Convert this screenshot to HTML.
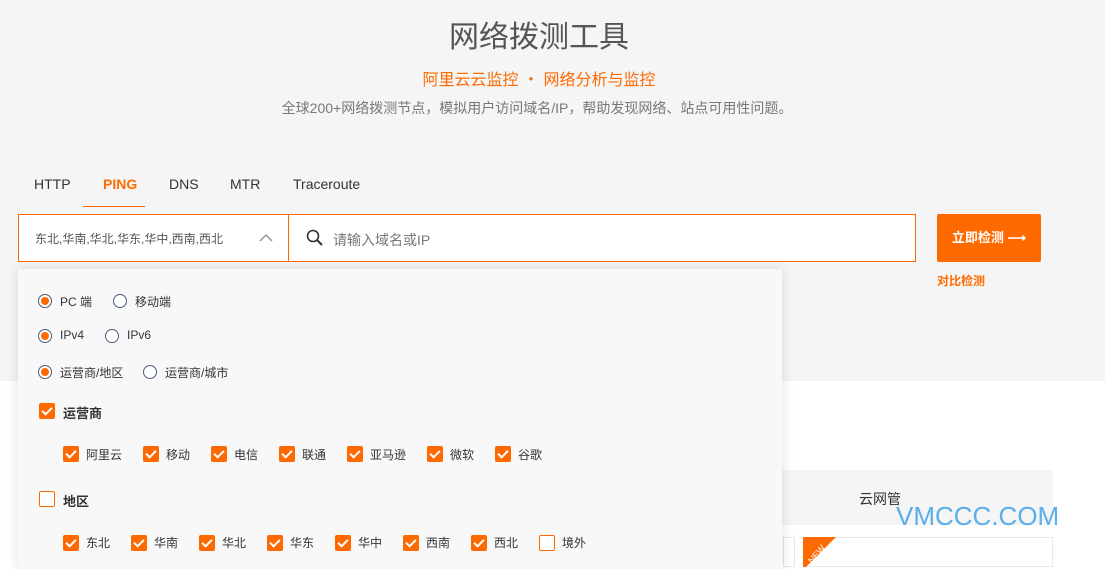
<!DOCTYPE html>
<html><head><meta charset="utf-8"><style>
*{margin:0;padding:0;box-sizing:border-box}
body{width:1105px;height:560px;overflow:hidden;position:relative;background:#fff;font-family:"Liberation Sans","Noto Sans CJK SC",sans-serif;color:#333}
.top{position:absolute;left:0;top:0;width:1105px;height:381px;background:#f5f5f5}
.abs{position:absolute}
h1{position:absolute;left:0;width:1078px;top:12px;text-align:center;font-size:30px;font-weight:normal;color:#555}
.sub{left:0;width:1078px;top:66px;text-align:center;font-size:16px;color:#ff6a00}
.desc{left:0;width:1074px;top:98px;text-align:center;font-size:14px;color:#777}
.tab{top:176px;font-size:14px;color:#333}
.sel{left:18px;top:214px;width:271px;height:48px;border:1px solid #ff6a00;background:#fff}
.inp{left:288px;top:214px;width:628px;height:48px;border:1px solid #ff6a00;background:#fff}
.btn{left:937px;top:214px;width:104px;height:48px;background:#ff6a00;color:#fff;font-size:13px;font-weight:bold;line-height:48px;text-align:center;border-radius:2px}
.panel{left:18px;top:269px;width:764px;height:300px;background:#f8f8f8;box-shadow:0 0 12px rgba(0,0,0,.12)}
.r{position:absolute;width:14px;height:14px;border:1px solid #4a5e78;border-radius:50%;background:#fff}
.r.on::after{content:"";position:absolute;left:2px;top:2px;width:8px;height:8px;border-radius:50%;background:#ff6a00}
.t{position:absolute;font-size:12px;color:#333}
.c{position:absolute;width:16px;height:16px;border-radius:2px;background:#ff6a00}
.c::after{content:"";position:absolute;left:5px;top:2px;width:4px;height:8px;border:solid #fff;border-width:0 2px 2px 0;transform:rotate(45deg)}
.c.off{background:#fff;border:1px solid #ff6a00}
.c.off::after{display:none}
</style></head><body>
<div class="top"></div>
<h1>网络拨测工具</h1>
<div class="abs sub">阿里云云监控 ・ 网络分析与监控</div>
<div class="abs desc">全球200+网络拨测节点，模拟用户访问域名/IP，帮助发现网络、站点可用性问题。</div>
<div class="abs tab" style="left:34px">HTTP</div>
<div class="abs tab" style="left:103px;color:#ff6a00;font-weight:bold">PING</div>
<div class="abs" style="left:83px;top:206px;width:62px;height:1px;background:#ff6a00"></div>
<div class="abs tab" style="left:169px">DNS</div>
<div class="abs tab" style="left:230px">MTR</div>
<div class="abs tab" style="left:293px">Traceroute</div>
<div class="abs sel"><span class="abs" style="left:16px;top:15px;font-size:12px;color:#555">东北,华南,华北,华东,华中,西南,西北</span>
<svg class="abs" style="left:240px;top:18px" width="14" height="10"><path d="M1 8 L7 2 L13 8" fill="none" stroke="#999" stroke-width="1.5"/></svg></div>
<div class="abs inp"><svg class="abs" style="left:17px;top:14px" width="18" height="18"><circle cx="7" cy="7" r="5.5" fill="none" stroke="#333" stroke-width="1.6"/><path d="M11 11 L16 16" stroke="#333" stroke-width="2"/></svg>
<span class="abs" style="left:44px;top:15px;font-size:14px;color:#777">请输入域名或IP</span></div>
<div class="abs btn">立即检测 ⟶</div>
<div class="abs" style="left:937px;top:272px;font-size:12px;font-weight:bold;color:#ff6a00">对比检测</div>
<div class="abs" style="left:780px;top:470px;width:273px;height:55px;background:#f5f5f5"></div>
<div class="abs" style="left:859px;top:489px;font-size:14px;color:#333">云网管</div>
<div class="abs" style="left:783px;top:537px;width:12px;height:30px;border:1px solid #e5e5e5"></div>
<div class="abs" style="left:803px;top:537px;width:250px;height:30px;border:1px solid #e8e8e8"></div>
<svg class="abs" style="left:803px;top:537px" width="40" height="30"><polygon points="0,0 33,0 0,33" fill="#ff6a00"/><text x="4" y="24" fill="#fff" font-size="9" font-family="Liberation Sans" transform="rotate(-50 10 20)">NEW</text></svg>
<div class="abs" style="left:896px;top:501px;font-size:26px;color:#5aaeea">VMCCC.COM</div>
<div class="abs panel">
<div class="r on" style="left:20px;top:25px"></div><div class="t" style="left:42px;top:24px">PC 端</div>
<div class="r" style="left:95px;top:25px"></div><div class="t" style="left:117px;top:24px">移动端</div>
<div class="r on" style="left:20px;top:60px"></div><div class="t" style="left:42px;top:59px">IPv4</div>
<div class="r" style="left:87px;top:60px"></div><div class="t" style="left:109px;top:59px">IPv6</div>
<div class="r on" style="left:20px;top:96px"></div><div class="t" style="left:42px;top:95px">运营商/地区</div>
<div class="r" style="left:125px;top:96px"></div><div class="t" style="left:147px;top:95px">运营商/城市</div>
<div class="c" style="left:21px;top:134px"></div><div class="t" style="left:45px;top:134px;font-size:13px;font-weight:bold">运营商</div>
<div class="c" style="left:45px;top:177px"></div><div class="t" style="left:68px;top:177px">阿里云</div>
<div class="c" style="left:125px;top:177px"></div><div class="t" style="left:148px;top:177px">移动</div>
<div class="c" style="left:193px;top:177px"></div><div class="t" style="left:216px;top:177px">电信</div>
<div class="c" style="left:261px;top:177px"></div><div class="t" style="left:284px;top:177px">联通</div>
<div class="c" style="left:329px;top:177px"></div><div class="t" style="left:352px;top:177px">亚马逊</div>
<div class="c" style="left:409px;top:177px"></div><div class="t" style="left:432px;top:177px">微软</div>
<div class="c" style="left:477px;top:177px"></div><div class="t" style="left:500px;top:177px">谷歌</div>
<div class="c off" style="left:21px;top:222px"></div><div class="t" style="left:45px;top:222px;font-size:13px;font-weight:bold">地区</div>
<div class="c" style="left:45px;top:266px"></div><div class="t" style="left:68px;top:265px">东北</div>
<div class="c" style="left:113px;top:266px"></div><div class="t" style="left:136px;top:265px">华南</div>
<div class="c" style="left:181px;top:266px"></div><div class="t" style="left:204px;top:265px">华北</div>
<div class="c" style="left:249px;top:266px"></div><div class="t" style="left:272px;top:265px">华东</div>
<div class="c" style="left:317px;top:266px"></div><div class="t" style="left:340px;top:265px">华中</div>
<div class="c" style="left:385px;top:266px"></div><div class="t" style="left:408px;top:265px">西南</div>
<div class="c" style="left:453px;top:266px"></div><div class="t" style="left:476px;top:265px">西北</div>
<div class="c off" style="left:521px;top:266px"></div><div class="t" style="left:544px;top:265px">境外</div>
</div>
</body></html>
